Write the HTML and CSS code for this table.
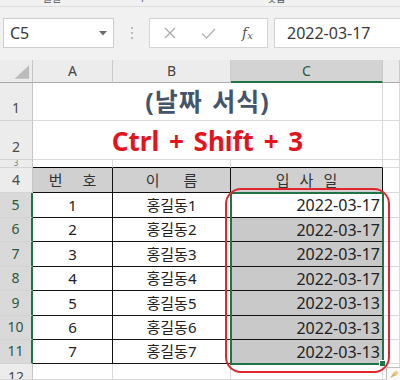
FILE: index.html
```html
<!DOCTYPE html>
<html lang="ko">
<head>
<meta charset="utf-8">
<title>날짜 서식</title>
<link rel="stylesheet" href="styles.css">
</head>
<body>
<div class="ribbon"><span class="rl rl1">글꼴</span><span class="rl rl2">/</span><span class="rl rl3">맞춤</span></div>
<div class="fbar">
  <div class="namebox"><span>C5</span><svg class="caret" width="8" height="5" viewBox="0 0 8 5"><path d="M0 0H8L4 4.5Z" fill="#6b6b6b"/></svg></div>
  <div class="grip"><svg width="4" height="14" viewBox="0 0 4 14"><circle cx="2" cy="2" r="1.1" fill="#b0b0b0"/><circle cx="2" cy="7" r="1.1" fill="#b0b0b0"/><circle cx="2" cy="12" r="1.1" fill="#b0b0b0"/></svg></div>
  <div class="fbtns">
    <span class="fb"><svg width="12" height="12" viewBox="0 0 12 12"><path d="M1 1L11 11M11 1L1 11" stroke="#ababab" stroke-width="1.3" fill="none"/></svg></span>
    <span class="fb"><svg width="15" height="11" viewBox="0 0 15 11"><path d="M1 5.5L5.5 10L14 1" stroke="#b3b3b3" stroke-width="1.4" fill="none"/></svg></span>
    <span class="fb fx"><i>f</i><i class="sx">x</i></span>
  </div>
  <div class="finput">2022-03-17</div>
</div>
<div class="sheet">
  <div class="c corner"><svg width="33" height="23" viewBox="0 0 33 23"><path d="M15 19H30V5Z" fill="#bcbcbc"/></svg></div>
  <div class="c ch">A</div>
  <div class="c ch">B</div>
  <div class="c ch chs">C</div>
  <div class="c ch"></div>

  <div class="c rh">1</div>
  <div class="c m title">(날짜 서식)</div>
  <div class="c"></div>

  <div class="c rh">2</div>
  <div class="c m sub">Ctrl + Shift + 3</div>
  <div class="c"></div>

  <div class="c rh rh3">3</div>
  <div class="c top"></div>
  <div class="c top"></div>
  <div class="c top"></div>
  <div class="c"></div>

  <div class="c rh">4</div>
  <div class="c t hd"><span>번</span><span>호</span></div>
  <div class="c t hd hd2"><span>이</span><span>름</span></div>
  <div class="c t hd hd3"><span>입</span><span>사</span><span>일</span></div>
  <div class="c"></div>

  <div class="c rh rs">5</div>
  <div class="c t">1</div>
  <div class="c t">홍길동1</div>
  <div class="c t d">2022-03-17</div>
  <div class="c"></div>

  <div class="c rh rs">6</div>
  <div class="c t">2</div>
  <div class="c t">홍길동2</div>
  <div class="c t d sl">2022-03-17</div>
  <div class="c"></div>

  <div class="c rh rs">7</div>
  <div class="c t">3</div>
  <div class="c t">홍길동3</div>
  <div class="c t d sl">2022-03-17</div>
  <div class="c"></div>

  <div class="c rh rs">8</div>
  <div class="c t">4</div>
  <div class="c t">홍길동4</div>
  <div class="c t d sl">2022-03-17</div>
  <div class="c"></div>

  <div class="c rh rs">9</div>
  <div class="c t">5</div>
  <div class="c t">홍길동5</div>
  <div class="c t d sl">2022-03-13</div>
  <div class="c"></div>

  <div class="c rh rs">10</div>
  <div class="c t">6</div>
  <div class="c t">홍길동6</div>
  <div class="c t d sl">2022-03-13</div>
  <div class="c"></div>

  <div class="c rh rs">11</div>
  <div class="c t">7</div>
  <div class="c t">홍길동7</div>
  <div class="c t d sl">2022-03-13</div>
  <div class="c"></div>

  <div class="c rh rh12">12</div>
  <div class="c"></div>
  <div class="c"></div>
  <div class="c"></div>
  <div class="c"></div>

  <div class="sel"></div>
  <div class="handle"></div>
  <div class="ring"></div>
  <div class="qa"><svg width="10" height="9" viewBox="0 0 10 9"><path d="M1 8L5 2L8 5Z" fill="#d8b46a"/><circle cx="7" cy="3" r="2" fill="#e8c98a"/></svg></div>
</div>
</body>
</html>
```

FILE: styles.css
```css
html, body {
  margin: 0;
  padding: 0;
}
body {
  width: 400px;
  height: 380px;
  overflow: hidden;
  background: #f1f1f1;
  font-family: "Noto Sans", "Noto Sans CJK KR", sans-serif;
  color: #222;
}

/* ribbon remnant */
.ribbon {
  height: 6px;
  overflow: hidden;
  border-bottom: 1px solid #dcdcdc;
  display: flex;
  align-items: flex-start;
  font-size: 10px;
  line-height: 10px;
  color: #555;
}
.rl {
  margin-top: -7px;
}
.rl1 { margin-left: 43px; }
.rl2 { margin-left: 80px; }
.rl3 { margin-left: 122px; }

/* formula bar */
.fbar {
  height: 53px;
  box-sizing: border-box;
  padding-top: 11px;
  display: flex;
  align-items: flex-start;
}
.namebox {
  margin-left: 3px;
  width: 111px;
  height: 30px;
  box-sizing: border-box;
  background: #fff;
  border: 1px solid #cdcdcd;
  padding: 0 6px;
  display: flex;
  align-items: center;
  justify-content: space-between;
  font-size: 16px;
  color: #3a3a3a;
}
.grip {
  width: 35px;
  height: 30px;
  display: flex;
  align-items: center;
  justify-content: center;
}
.fbtns {
  width: 119px;
  height: 30px;
  box-sizing: border-box;
  background: #fff;
  border: 1px solid #d4d4d4;
  display: flex;
  align-items: center;
}
.fb {
  width: 39px;
  display: flex;
  justify-content: center;
  align-items: center;
}
.fx {
  font-family: "DejaVu Serif", serif;
  color: #555;
  font-size: 14px;
}
.fx .sx {
  font-size: 10px;
  margin-top: 5px;
}
.finput {
  margin-left: 6px;
  flex: 1;
  height: 30px;
  box-sizing: border-box;
  background: #fff;
  border: 1px solid #d4d4d4;
  border-right: none;
  padding-left: 12px;
  display: flex;
  align-items: center;
  font-size: 16px;
  color: #3a3a3a;
}

/* sheet */
.sheet {
  position: relative;
  display: grid;
  grid-template-columns: 33px 80px 118px 152px 17px;
  grid-template-rows: 23px 38px 39px 8px 25px 25px 24px 25px 24px 25px 24px 24px 16px;
  background: #fff;
  height: 320px;
}
.c {
  box-sizing: border-box;
  border-right: 1px solid #dadada;
  border-bottom: 1px solid #dadada;
  overflow: hidden;
  display: flex;
  align-items: center;
  justify-content: center;
  font-size: 16px;
  line-height: 1;
}
.corner {
  background: #ececec;
  border-right: 1px solid #c6c6c6;
  border-bottom: 1px solid #ababab;
}
.ch {
  background: #ececec;
  border-right: 1px solid #cacaca;
  border-bottom: 1px solid #ababab;
  font-size: 14px;
  color: #444;
}
.chs {
  background: #d3d3d3;
  color: #265c3e;
  border-bottom: 2px solid #217346;
  padding-top: 1px;
}
.rh {
  background: #ececec;
  border-right: 1px solid #c6c6c6;
  border-bottom: 1px solid #d4d4d4;
  align-items: flex-end;
  padding-bottom: 5px;
  font-size: 14px;
  color: #4a4a4a;
}
.rh3 {
  font-size: 8px;
  padding-bottom: 0;
  color: #777;
}
.rh12 {
  align-items: flex-start;
  padding-bottom: 0;
  padding-top: 6px;
}
.rs {
  background: #d9d9d9;
  color: #2b5a40;
  border-right: 2px solid #217346;
}
.m {
  grid-column: span 3;
  font-weight: bold;
}
.title {
  font-size: 25px;
  color: #44546a;
  letter-spacing: 1px;
  word-spacing: 2px;
}
.sub {
  font-size: 26px;
  color: #e3141c;
  word-spacing: 3px;
  padding-top: 1px;
}
.top {
  border-bottom-color: #000;
}
.t {
  border-right-color: #111;
  border-bottom-color: #111;
  font-size: 15px;
  color: #222;
}
.hd {
  background: #d0d0d0;
  gap: 20px;
  color: #333;
}
.hd2 {
  gap: 24px;
}
.hd3 {
  gap: 10px;
}
.d {
  justify-content: flex-end;
  padding-right: 2px;
  font-size: 16px;
}
.sl {
  background: #c9c9c9;
}

/* overlays */
.sel {
  position: absolute;
  left: 230px;
  top: 132px;
  width: 154px;
  height: 173px;
  box-sizing: border-box;
  border: 2px solid #217346;
}
.handle {
  position: absolute;
  left: 379px;
  top: 300px;
  width: 5px;
  height: 5px;
  background: #217346;
  border: 1px solid #fff;
}
.ring {
  position: absolute;
  left: 225px;
  top: 128px;
  width: 165px;
  height: 185px;
  box-sizing: border-box;
  border: 2px solid #e0262e;
  border-radius: 16px;
}
.qa {
  position: absolute;
  left: 386px;
  top: 307px;
  width: 16px;
  height: 14px;
  box-sizing: border-box;
  border: 1px solid #bdbdbd;
  background: #fafafa;
  display: flex;
  align-items: center;
  justify-content: center;
}
```
